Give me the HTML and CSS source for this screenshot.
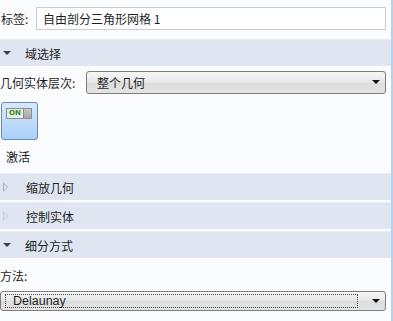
FILE: index.html
```html
<!DOCTYPE html>
<html lang="zh-CN">
<head>
    <meta charset="UTF-8">
    <title>自由剖分三角形网格</title>
    <link rel="stylesheet" href="styles.css">
</head>
<body>
    <div class="panel">
        <div class="label_row">
            <span class="label_text">标签:</span>
            <div class="text_box">自由剖分三角形网格 1</div>
        </div>

        <div class="section open">
            <span class="arrow_down"></span>
            <span class="section_title">域选择</span>
        </div>

        <div class="field_row">
            <span class="field_label">几何实体层次:</span>
            <div class="combo combo_wide">
                <span class="combo_value">整个几何</span>
                <span class="combo_arrow"></span>
            </div>
        </div>

        <div class="toggle_block">
            <div class="toggle_btn">
                <div class="switch">
                    <span class="switch_on">ON</span>
                    <span class="switch_knob"></span>
                </div>
            </div>
            <span class="toggle_label">激活</span>
        </div>

        <div class="section">
            <span class="arrow_right"></span>
            <span class="section_title">缩放几何</span>
        </div>
        <div class="section">
            <span class="arrow_right faint"></span>
            <span class="section_title">控制实体</span>
        </div>
        <div class="section open">
            <span class="arrow_down"></span>
            <span class="section_title">细分方式</span>
        </div>

        <div class="method_label">方法:</div>
        <div class="combo combo_full">
            <span class="focus_box">Delaunay</span>
            <span class="combo_arrow"></span>
        </div>
    </div>
</body>
</html>
```

FILE: styles.css
```css
*{
    margin: 0;
    padding: 0;
    box-sizing: border-box;
}
body{
    background-color: #ffffff;
    font-family: "Noto Sans CJK SC", "Open Sans", sans-serif;
    font-size: 12px;
    color: #1e1e1e;
}
.panel{
    width: 393px;
    height: 321px;
    background-color: #fbfcfe;
    border-right: 2px solid #b4d2ee;
    display: flex;
    flex-direction: column;
}

.label_row{
    display: flex;
    align-items: center;
    height: 37px;
    padding-bottom: 1px;
}
.label_text{
    width: 36px;
    padding-left: 1px;
}
.text_box{
    width: 350px;
    height: 23px;
    background-color: #ffffff;
    border: 1px solid #c9cdd3;
    padding-left: 6px;
    line-height: 21px;
}

.section{
    height: 27px;
    margin-top: 2px;
    background-color: #dfe6f1;
    display: flex;
    align-items: center;
    border-top: 1px solid #e8edf5;
}
.section_title{
    margin-left: 14px;
}
.arrow_down{
    width: 0;
    height: 0;
    margin-left: 3px;
    border-left: 4px solid transparent;
    border-right: 4px solid transparent;
    border-top: 4px solid #3a3f48;
}
.arrow_right{
    position: relative;
    width: 0;
    height: 0;
    margin-left: 3px;
    margin-right: 4px;
    border-top: 5px solid transparent;
    border-bottom: 5px solid transparent;
    border-left: 5px solid #a9b0ba;
}
.arrow_right::after{
    content: "";
    position: absolute;
    left: -4px;
    top: -3px;
    border-top: 3px solid transparent;
    border-bottom: 3px solid transparent;
    border-left: 3px solid #dfe6f1;
}
.arrow_right.faint{
    border-left-color: #c8d0dc;
}

.field_row{
    display: flex;
    align-items: center;
    height: 34px;
    padding-bottom: 2px;
}
.field_label{
    width: 86px;
}
.combo{
    height: 23px;
    border: 1px solid #7d7d7d;
    border-radius: 3px;
    background: linear-gradient(#f6f6f6, #e6e6e6 50%, #dcdcdc 51%, #e4e4e4);
    display: flex;
    align-items: center;
    justify-content: space-between;
}
.combo_wide{
    width: 300px;
}
.combo_value{
    padding-left: 10px;
}
.combo_arrow{
    width: 0;
    height: 0;
    margin-right: 5px;
    border-left: 4px solid transparent;
    border-right: 4px solid transparent;
    border-top: 4px solid #111111;
}

.toggle_block{
    display: flex;
    flex-direction: column;
    align-items: flex-start;
    height: 71px;
    padding-top: 2px;
}
.toggle_btn{
    width: 37px;
    height: 38px;
    margin-left: 1px;
    border: 1px solid #6a8bb8;
    border-radius: 3px;
    background: linear-gradient(#d7e9fd, #aacff7);
    padding: 5px 0 0 4px;
}
.switch{
    width: 26px;
    height: 11px;
    border: 1px solid #8a9096;
    background-color: #e8ede4;
    display: flex;
    align-items: center;
    justify-content: space-between;
}
.switch_on{
    font-family: "DejaVu Sans", sans-serif;
    font-size: 7px;
    font-weight: bold;
    color: #2e8b2e;
    padding-left: 2px;
    line-height: 9px;
}
.switch_knob{
    width: 8px;
    height: 9px;
    background: linear-gradient(#c9c9c9, #a4a4a4);
    border-left: 1px solid #8a8a8a;
}
.toggle_label{
    margin-top: 8px;
    margin-left: 6px;
}

.method_label{
    height: 33px;
    line-height: 36px;
}
.combo_full{
    width: 386px;
    height: 20px;
    padding: 2px 0 2px 4px;
}
.focus_box{
    flex: 1;
    height: 14px;
    margin-right: 14px;
    border: 1px dotted #444444;
    padding-left: 7px;
    font-family: "Liberation Sans", sans-serif;
    font-size: 12.5px;
    line-height: 12px;
}
```
